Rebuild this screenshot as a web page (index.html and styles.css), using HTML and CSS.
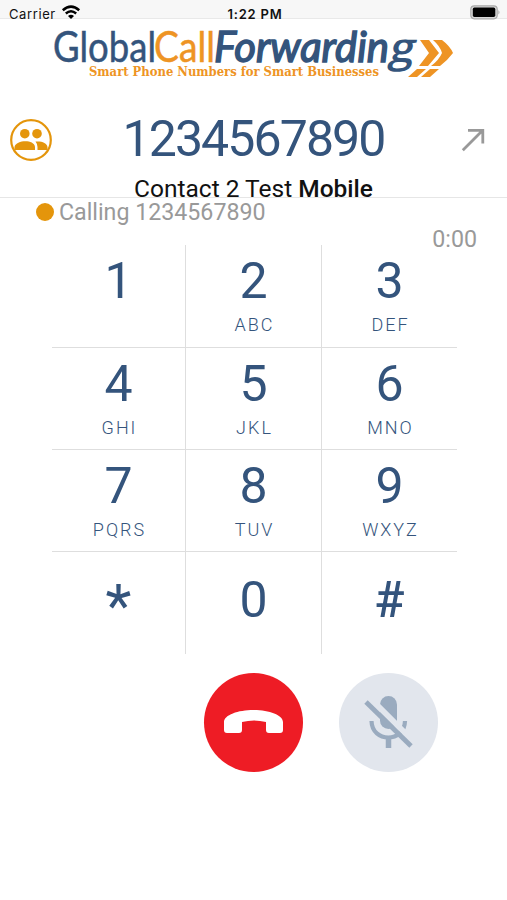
FILE: index.html
```html
<!DOCTYPE html>
<html lang="en">
<head>
    <meta charset="UTF-8">
    <meta name="viewport" content="width=device-width, initial-scale=1.0">
    <title>Global Call Forwarding</title>
    <link rel="stylesheet" href="styles.css">
</head>
<body>
    <div class="status-bar">
        <div class="carrier">
            <span>Carrier</span>
            <svg width="20" height="15" viewBox="0 0 20 15">
                <path d="M1.8 5.3 Q10 -2 18.2 5.3" fill="none" stroke="#000" stroke-width="2.5"/>
                <path d="M4.8 8.5 Q10 4 15.2 8.5" fill="none" stroke="#000" stroke-width="2.4"/>
                <path d="M7 10.9 Q10 8.6 13 10.9 L10 14Z"/>
            </svg>
        </div>
        <span class="clock">1:22 PM</span>
        <svg class="battery" width="31" height="15" viewBox="0 0 31 15">
            <rect x="0.8" y="0.8" width="26.4" height="13" rx="3.5" fill="#d8d8d8" stroke="#aaa" stroke-width="1.2"/>
            <rect x="2.8" y="2.6" width="22.5" height="9.3" rx="1.6"/>
            <path d="M28.4 5 Q30.6 7.3 28.4 9.6Z" fill="#aaa"/>
        </svg>
    </div>

    <header>
        <svg class="logo" width="507" height="70" viewBox="0 0 507 70">
            <g class="logo-name">
                <text x="53" y="42.5" textLength="103" lengthAdjust="spacingAndGlyphs" fill="#34547c" stroke="#34547c">Global</text>
                <text x="154" y="42.5" textLength="61" lengthAdjust="spacingAndGlyphs" fill="#ee9424" stroke="#ee9424">Call</text>
                <text class="logo-italic" x="214" y="42.5" textLength="175" lengthAdjust="spacingAndGlyphs">Forwardin</text>
                <text class="logo-g" transform="translate(388 42.5) skewX(-12)" x="0" y="0" textLength="25" lengthAdjust="spacingAndGlyphs">g</text>
            </g>
            <text class="logo-tagline" x="89" y="56.5" textLength="290" lengthAdjust="spacingAndGlyphs">Smart Phone Numbers for Smart Businesses</text>
            <g fill="#ee9424">
                <path d="M420 21H429L439 34L428 47H419L429 34Z"/>
                <path d="M433 21H442Q450 27 453 34Q447 42 440 47H431Q439 41 442 34Q440 27 433 21Z"/>
                <path d="M417 50H426L417 58H408Z"/>
                <path d="M430 50H439L430 58H421Z"/>
            </g>
        </svg>
    </header>

    <section class="dial-info">
        <svg class="contacts-icon" width="42" height="42" viewBox="0 0 42 42">
            <circle cx="21" cy="21" r="19.8" fill="none" stroke="#e4950b" stroke-width="2.2"/>
            <g fill="#e4950b">
                <circle cx="14.8" cy="14.7" r="4.8"/>
                <circle cx="27" cy="14.7" r="4.8"/>
                <path d="M4.5 31V28C6 21 24 20 25 28V31Z"/>
                <path d="M25.5 22.5C32 22 37 24 37.5 28V31H27.5V28Q27.5 25 25.5 22.5Z"/>
            </g>
        </svg>
        <div class="number">1234567890</div>
        <svg class="arrow-icon" width="24" height="24" viewBox="0 0 24 24">
            <path d="M1.8 22.2L21.5 2.5M7 2.3H21.8V15.5" fill="none" stroke="#999" stroke-width="2.8"/>
        </svg>
    </section>
    <div class="contact"><span>Contact 2 Test</span> <b>Mobile</b></div>

    <section class="call-status">
        <div class="calling"><i class="dot"></i><span>Calling 1234567890</span></div>
        <div class="timer">0:00</div>
    </section>

    <main class="keypad">
        <div class="key"><span class="digit">1</span></div>
        <div class="key"><span class="digit">2</span><span class="letters">ABC</span></div>
        <div class="key"><span class="digit">3</span><span class="letters">DEF</span></div>
        <div class="key"><span class="digit">4</span><span class="letters">GHI</span></div>
        <div class="key"><span class="digit">5</span><span class="letters">JKL</span></div>
        <div class="key"><span class="digit">6</span><span class="letters">MNO</span></div>
        <div class="key"><span class="digit">7</span><span class="letters">PQRS</span></div>
        <div class="key"><span class="digit">8</span><span class="letters">TUV</span></div>
        <div class="key"><span class="digit">9</span><span class="letters">WXYZ</span></div>
        <div class="key last"><span class="digit star">*</span></div>
        <div class="key last"><span class="digit">0</span></div>
        <div class="key last"><span class="digit hash">#</span></div>
    </main>

    <footer class="call-actions">
        <button class="btn btn-hangup" aria-label="Hang up">
            <svg width="99" height="99" viewBox="0 0 99 99">
                <path d="M20 49C20 42 34 37 49.5 37S79 42 79 49V57Q79 60 76 60H65Q62 60 62 57V49Q50 46 38 49V57Q38 60 35 60H23Q20 60 20 57Z" fill="#fff"/>
            </svg>
        </button>
        <button class="btn btn-mute" aria-label="Mute">
            <svg width="99" height="99" viewBox="0 0 99 99">
                <rect x="41" y="23" width="17" height="33" rx="8.5" fill="#9aabbf"/>
                <path d="M32.5 48C33 70 65.5 70 66 48" fill="none" stroke="#9aabbf" stroke-width="4.2"/>
                <path d="M49.5 64V75" stroke="#9aabbf" stroke-width="5.5"/>
                <path d="M31 25L75 69" stroke="#e2e6ed" stroke-width="6"/>
                <path d="M27 29L72 73" stroke="#9aabbf" stroke-width="4.8"/>
            </svg>
        </button>
    </footer>
</body>
</html>
```
FILE: styles.css
```css
* {
    margin: 0;
    padding: 0;
    box-sizing: border-box;
}

body {
    background: #fff;
    color: #111;
    font-family: "Roboto", sans-serif;
    min-height: 100vh;
    overflow-x: hidden;
}

svg {
    display: block;
    flex-shrink: 0;
}

.status-bar {
    height: 19px;
    padding: 5px 6px 0 9px;
    background: #f7f7f7;
    border-bottom: 1px solid #e9e9e9;
    display: grid;
    grid-template-columns: 1fr auto 1fr;
    align-items: start;
    font-family: "Inter", sans-serif;
    font-size: 13px;
    line-height: 18px;
}

.carrier {
    display: flex;
    gap: 5px;
    letter-spacing: 0.6px;
}

.clock {
    font-weight: 600;
    letter-spacing: 0.8px;
}

.battery {
    justify-self: end;
}

header {
    height: 70px;
}

.logo {
    overflow: visible;
}

.logo-name {
    font-family: "Lato", sans-serif;
    font-size: 42px;
    stroke-width: 0.5px;
}

.logo-italic {
    font-style: italic;
    fill: #34547c;
    stroke: #34547c;
    stroke-width: 1.5px;
}

.logo-g {
    font-family: "Open Sans", sans-serif;
    font-size: 41px;
    font-weight: 600;
    fill: #34547c;
}

.logo-tagline {
    font-family: "DejaVu Serif", serif;
    font-size: 12px;
    font-weight: bold;
    fill: #ee9424;
}

.dial-info {
    height: 86px;
    padding: 16px 22px 0 10px;
    display: grid;
    grid-template-columns: 42px 1fr 30px;
    align-items: center;
}

.number {
    color: #34547c;
    font-size: 50px;
    line-height: 58px;
    letter-spacing: -1.9px;
    text-align: center;
    padding: 0 0 3px;
}

.arrow-icon {
    justify-self: end;
}

.contact {
    height: 23px;
    border-bottom: 1px solid #e6e6e6;
    text-align: center;
    font-size: 24.5px;
    line-height: 28px;
}

.contact b {
    font-weight: 500;
}

.call-status {
    height: 47px;
    color: #999;
    font-size: 23.2px;
    line-height: 27px;
}

.calling {
    height: 28px;
    padding-left: 36px;
    display: flex;
    align-items: center;
    gap: 5px;
}

.dot {
    width: 18px;
    height: 18px;
    border-radius: 50%;
    background: #e4950b;
}

.timer {
    text-align: right;
    padding-right: 30px;
}

.keypad {
    width: 405px;
    margin-left: 52px;
    display: grid;
    grid-template-columns: 134px 136px 135px;
    grid-template-rows: 103px 102px 102px 102px;
}

.key {
    border-right: 1px solid #dedede;
    border-bottom: 1px solid #dedede;
    padding-top: 6px;
    display: flex;
    flex-direction: column;
    align-items: center;
    color: #34547c;
}

.key:nth-child(3n) {
    border-right: none;
}

.last {
    border-bottom: none;
    padding-top: 18px;
}

.digit {
    font-size: 50px;
    line-height: 61px;
}

.star {
    font-size: 60px;
    line-height: 72px;
}

.hash {
    font-weight: 500;
}

.letters {
    font-size: 18px;
    line-height: 20px;
    margin-top: 3px;
    padding-left: 2px;
    letter-spacing: 2px;
    font-weight: 300;
}

.call-actions {
    margin-top: 19px;
    padding-left: 204px;
    display: flex;
    gap: 36px;
}

.btn {
    width: 99px;
    height: 99px;
    border: none;
    border-radius: 50%;
    cursor: pointer;
}

.btn-hangup {
    background: #ee1c25;
}

.btn-mute {
    background: #e2e6ed;
}
```
